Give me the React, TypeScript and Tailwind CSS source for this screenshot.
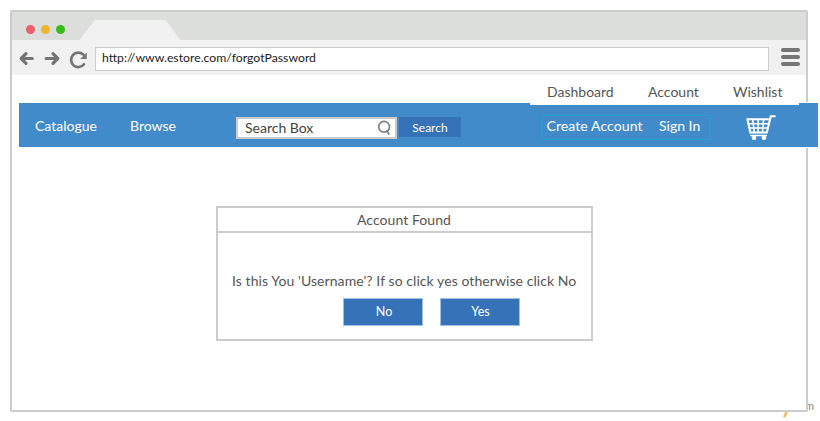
function WindowBar() {
  return (
    <div className="flex h-7 shrink-0 bg-[#dcdedb]">
      <div className="flex items-center gap-[5.5px] pt-[7px] pl-[13.5px]">
        <span className="size-[9.5px] rounded-full bg-[#ea5f6c]" />
        <span className="size-[9.5px] rounded-full bg-[#ecb62d]" />
        <span className="size-[9.5px] rounded-full bg-[#37bd1a]" />
      </div>
      <svg className="mt-2 ml-[14px] h-5 w-[102px]" viewBox="0 0 102 20" fill="#f1f1f1">
        <path d="M0.5 20 15.5 0H86.5L101.5 20Z" />
      </svg>
    </div>
  );
}

function Toolbar() {
  return (
    <div className="flex h-[35px] shrink-0 bg-[#f1f1f1]">
      <svg className="h-[35px] w-[83px]" viewBox="12 40 83 35" fill="none" stroke="#757575">
        <path d="M32.3 58.5H22M26 53.7 21.2 58.5 26 63.3" strokeWidth="3.2" strokeLinecap="round" strokeLinejoin="round" />
        <path d="M46.2 58.5H57M53 53.7 57.8 58.5 53 63.3" strokeWidth="3.2" strokeLinecap="round" strokeLinejoin="round" />
        <path d="M84 64.2A7.2 7.2 0 1 1 83.2 54.6" strokeWidth="2.7" strokeLinecap="round" />
        <path d="M86.8 52.5V58.9H80.2Z" fill="#757575" stroke="none" />
      </svg>
      <div className="mt-[7px] flex h-6 w-[674px] items-center border border-[#ccc] bg-white pb-px pl-1.5 text-[12.25px] text-[#222]">
        <span className="whitespace-nowrap">http://www.estore.com/forgotPassword</span>
      </div>
      <div className="mt-2 ml-3 flex w-[19px] flex-col gap-[3px]">
        <span className="h-1 rounded-full bg-[#757575]" />
        <span className="h-1 rounded-full bg-[#757575]" />
        <span className="h-1 rounded-full bg-[#757575]" />
      </div>
    </div>
  );
}

function Cart() {
  return (
    <svg className="mt-[11px] ml-[35px] h-[26px] w-[31px]" viewBox="746 114 31 26" fill="none" stroke="#fff">
      <path d="M746.4 119.2H769.5M747.5 119.5 750.3 132.5H766.8L770.8 116.3H775.6" strokeWidth="2.1" />
      <path d="M748.5 123.7H768.5M749.3 128H767.5M752.8 119.5 754.2 132M758.2 119.5V132M763.6 119.5 762.5 132" strokeWidth="1.6" />
      <path d="M750.3 135.5H767" strokeWidth="1.5" />
      <circle cx="754" cy="137.7" r="2.3" fill="#fff" stroke="none" />
      <circle cx="764" cy="137.7" r="2.3" fill="#fff" stroke="none" />
    </svg>
  );
}

function NavBar() {
  return (
    <div className="relative ml-[7px] flex h-[46px] w-[799px] shrink-0 border-y border-white bg-[#428bca] text-[14px] leading-5 whitespace-nowrap text-white">
      <span className="mt-[13px] ml-4 w-[95px]">Catalogue</span>
      <span className="mt-[13px] w-[106px]">Browse</span>
      <div className="mt-3.5 flex h-[22px] w-[161px] justify-between border-2 border-[#ccc] bg-white pl-[7px] text-[#444]">
        <span className="leading-[17px]">Search Box</span>
        <svg className="mt-px mr-[3px] size-[15px]" viewBox="0 0 15 15" fill="none" stroke="#808080" strokeWidth="1.7">
          <circle cx="7.1" cy="6.8" r="5.4" />
          <path d="M9.3 10.2 12.3 14.4" />
        </svg>
      </div>
      <button className="mt-3.5 ml-0.5 h-5 w-[62px] bg-[#3572b8] pt-px text-center text-[12px] leading-5">Search</button>
      <div className="mt-3 ml-[81px] flex h-[25px] w-[169px] border border-[#2d9bd5] pl-[3.5px]">
        <span className="w-[112.5px] tracking-[0.1px]">Create Account</span>
        <span>Sign In</span>
      </div>
      <Cart />
    </div>
  );
}

function AccountDialog() {
  return (
    <div className="mt-[58px] ml-[204px] flex h-[135px] w-[377px] shrink-0 flex-col border-2 border-[#ccc] text-[14px] whitespace-nowrap text-[#555]">
      <div className="h-[25px] border-b-2 border-[#ccc] pr-px text-center leading-[23px] tracking-[0.07px]">Account Found</div>
      <p className="mt-[38px] ml-3.5 leading-5 tracking-[0.07px]">Is this You 'Username'? If so click yes otherwise click No</p>
      <div className="mt-[7px] ml-[125px] flex gap-[17px] text-[12.5px] text-white">
        <button className="h-7 w-20 border border-[#9dc0e3] bg-[#3572b8] pt-px pl-0.5">No</button>
        <button className="h-7 w-20 border border-[#9dc0e3] bg-[#3572b8] pt-px pl-px">Yes</button>
      </div>
    </div>
  );
}

export default function App() {
  return (
    <div className="relative h-[421px] w-[820px] overflow-hidden bg-white font-['Lato',sans-serif]">
      <svg className="absolute top-[411px] left-[782px] h-[7px] w-2" viewBox="0 0 8 7" stroke="#fbb561" strokeWidth="2.5">
        <path d="M5 0 2.3 6" />
      </svg>
      <span className="absolute top-[399px] left-[805px] text-[11px] leading-[14px] text-[#888]">m</span>
      <div className="relative mt-2.5 ml-2.5 flex h-[402px] w-[798px] flex-col rounded-[2px] border-2 border-[#ccc] bg-white">
        <WindowBar />
        <Toolbar />
        <div className="relative z-10 -mb-[3px] ml-[518px] flex h-[30px] w-[269px] shrink-0 bg-white pt-[7px] pl-[17px] text-[14px] leading-5 whitespace-nowrap text-[#555]">
          <span className="w-[101px]">Dashboard</span>
          <span className="w-[85px]">Account</span>
          <span>Wishlist</span>
        </div>
        <NavBar />
        <AccountDialog />
      </div>
    </div>
  );
}
